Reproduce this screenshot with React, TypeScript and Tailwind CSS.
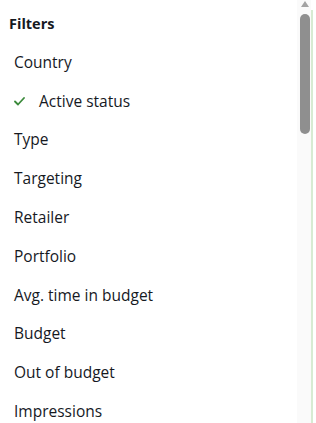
import React from 'react';

const filters = [
  { label: 'Country' },
  { label: 'Active status', checked: true },
  { label: 'Type' },
  { label: 'Targeting' },
  { label: 'Retailer' },
  { label: 'Portfolio' },
  { label: 'Avg. time in budget' },
  { label: 'Budget' },
  { label: 'Out of budget' },
  { label: 'Impressions' },
];

const Check = () => (
  <svg width="11" height="9" viewBox="0 0 11 9" className="shrink-0">
    <path d="M1 4.5 L4 7.5 L10 1" fill="none" stroke="#3b8a3b" strokeWidth="1.8" strokeLinecap="round" strokeLinejoin="round" />
  </svg>
);

export default function App() {
  return (
    <div className="flex h-[423px] w-[316px] overflow-hidden bg-white text-[#16191f]" style={{ fontFamily: '"Open Sans", Arial, sans-serif' }}>
      <div className="flex w-[297px] flex-col">
        <div className="flex h-[43px] shrink-0 items-center pl-[9px] pt-[4px] text-[14.5px] font-bold">Filters</div>
        {filters.map((f) => (
          <div key={f.label} className="flex h-[38.8px] shrink-0 items-center gap-[14px] pl-[14px] text-[15.5px]">
            {f.checked && <Check />}
            <span>{f.label}</span>
          </div>
        ))}
      </div>
      <div className="relative w-[14px] bg-[#fafafa]">
        <div className="absolute left-[4px] top-[1px] h-0 w-0 border-x-[4px] border-b-[6px] border-x-transparent border-b-[#a3a3a3]" />
        <div className="absolute left-[3px] top-[14px] h-[120px] w-[10px] rounded-full bg-[#8f8f8f]" />
      </div>
      <div className="mt-[10px] w-[2px] bg-[#d7ebd2]" />
      <div className="flex-1 bg-white" />
    </div>
  );
}
